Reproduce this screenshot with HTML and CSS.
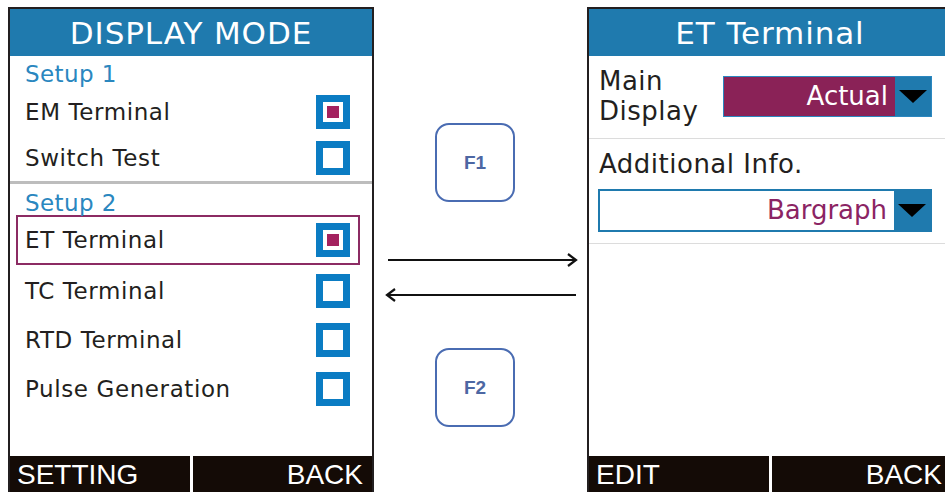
FILE: index.html
```html
<html>
  <head>
    <link rel="stylesheet" href="styles.css">
    <title>Display Mode</title>
  </head>
  <body>
    <div class="stage">

      <section class="screen">
        <div class="screen-title">DISPLAY MODE</div>
        <div class="group group-first">
          <div class="group-name">Setup 1</div>
          <div class="item"><span>EM Terminal</span><span class="check on"></span></div>
          <div class="item"><span>Switch Test</span><span class="check"></span></div>
        </div>
        <div class="group group-second">
          <div class="group-name">Setup 2</div>
          <div class="item selected"><span>ET Terminal</span><span class="check on"></span></div>
          <div class="item tall"><span>TC Terminal</span><span class="check"></span></div>
          <div class="item tall"><span>RTD Terminal</span><span class="check"></span></div>
          <div class="item tall"><span>Pulse Generation</span><span class="check"></span></div>
        </div>
        <div class="softkeys">
          <div class="softkey">SETTING</div>
          <div class="softkey right">BACK</div>
        </div>
      </section>

      <div class="middle">
        <div class="fkey">F1</div>
        <svg class="arrows" width="213" height="55" viewBox="0 0 213 55">
          <g fill="none" stroke="#111" stroke-width="2.2">
            <line x1="14" y1="10" x2="201" y2="10"/>
            <polyline points="194,4 202,10 194,16"/>
            <line x1="14" y1="45" x2="202" y2="45"/>
            <polyline points="21,39 13,45 21,51"/>
          </g>
        </svg>
        <div class="fkey second">F2</div>
      </div>

      <section class="screen">
        <div class="screen-title">ET Terminal</div>
        <div class="field inline">
          <div class="field-label">Main<br>Display</div>
          <div class="select filled">
            <div class="select-value">Actual</div>
            <div class="select-arrow"><span class="caret"></span></div>
          </div>
        </div>
        <div class="field">
          <div class="field-label">Additional Info.</div>
          <div class="select wide">
            <div class="select-value">Bargraph</div>
            <div class="select-arrow"><span class="caret"></span></div>
          </div>
        </div>
        <div class="softkeys">
          <div class="softkey">EDIT</div>
          <div class="softkey right">BACK</div>
        </div>
      </section>

    </div>
  </body>
</html>
```

FILE: styles.css
```css
body {
  margin: 0;
  background: #fff;
  overflow: hidden;
  font-family: "DejaVu Sans", Verdana, sans-serif;
  color: #231f20;
}

.stage {
  display: flex;
  align-items: flex-start;
  width: 945px;
  height: 492px;
  overflow: hidden;
}

.screen {
  flex: none;
  width: 366px;
  height: 493px;
  margin-top: 7px;
  box-sizing: border-box;
  border: solid 2px #231f20;
  border-bottom: none;
  display: flex;
  flex-direction: column;
}
.screen:first-child {
  margin-left: 8px;
}

.screen-title {
  height: 47px;
  padding-top: 2px;
  box-sizing: border-box;
  background-color: #1f7aae;
  color: #fff;
  font-size: 31px;
  line-height: 45px;
  letter-spacing: 0.9px;
  text-align: center;
}

/* left screen: list of modes */
.group-first {
  padding-top: 3px;
  border-bottom: solid 3px #bdbdbd;
}
.group-second {
  padding-top: 8px;
}
.group-name {
  padding-left: 15px;
  color: #2a87bf;
  font-size: 23px;
  line-height: 30px;
  letter-spacing: 0.4px;
}
.group-second .group-name {
  line-height: 23px;
}

.item {
  height: 46px;
  padding: 0 22px 0 15px;
  display: flex;
  justify-content: space-between;
  align-items: center;
  font-size: 23px;
  line-height: 30px;
  letter-spacing: 0.6px;
}
.item.tall {
  height: 49px;
}
.item.selected {
  height: 50px;
  box-sizing: border-box;
  margin: 0 12px 1px 6px;
  padding: 0 8px 0 7px;
  border: solid 2px #8c2b63;
}

.check {
  width: 20px;
  height: 20px;
  border: solid 7px #0b7cc3;
  display: flex;
  justify-content: center;
  align-items: center;
}
.check.on::after {
  content: "";
  width: 12px;
  height: 12px;
  background-color: #a4225f;
}

.softkeys {
  margin-top: auto;
  height: 44px;
  display: flex;
  gap: 3px;
}
.softkey {
  flex: 1;
  padding: 0 9px 0 7px;
  background-color: #140b06;
  color: #fff;
  font-family: "Liberation Sans", Arial, sans-serif;
  font-size: 28px;
  line-height: 37px;
}
.softkey.right {
  text-align: right;
}

/* middle: function keys and arrows */
.middle {
  flex: none;
  width: 213px;
  display: flex;
  flex-direction: column;
}
.fkey {
  margin: 123px 0 0 61px;
  width: 80px;
  height: 79px;
  box-sizing: border-box;
  border: solid 2px #4a6cb2;
  border-radius: 14px;
  display: flex;
  justify-content: center;
  align-items: center;
  color: #4d67a3;
  font-family: "Liberation Sans", Arial, sans-serif;
  font-weight: bold;
  font-size: 19px;
}
.fkey.second {
  margin-top: 43px;
}
.arrows {
  margin-top: 48px;
  display: block;
}

/* right screen: settings */
.field {
  padding: 10px 19px 11px 10px;
  border-bottom: solid 1px #dcdcdc;
  font-size: 26px;
  line-height: 30px;
  letter-spacing: 0.5px;
}
.field.inline {
  padding-bottom: 12px;
  display: flex;
  align-items: center;
}
.field.inline .field-label {
  width: 124px;
}

.select {
  display: flex;
  box-sizing: border-box;
  width: 209px;
  height: 41px;
  border: solid 1px #2b87c0;
  font-size: 26px;
  line-height: 39px;
  letter-spacing: 0;
}
.select.wide {
  width: 334px;
  height: 43px;
  margin: 10px 0 0 -1px;
  border: solid 2px #1f7aae;
}
.select-value {
  flex: 1;
  padding-right: 7px;
  text-align: right;
  background-color: #fff;
  color: #8b2463;
}
.select.filled .select-value {
  background-color: #8a2257;
  color: #fff;
}
.select-arrow {
  width: 36px;
  background-color: #1f7aae;
  display: flex;
  justify-content: center;
  align-items: center;
}
.caret {
  width: 0;
  height: 0;
  border-left: solid 14px transparent;
  border-right: solid 14px transparent;
  border-top: solid 13px #000;
}
```
